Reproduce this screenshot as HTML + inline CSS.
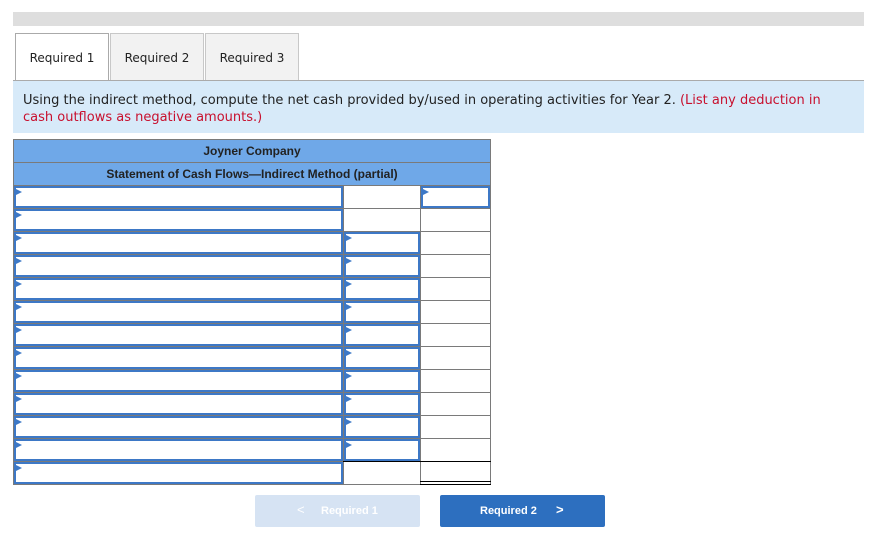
<!DOCTYPE html>
<html><head><style>
body{margin:0;width:888px;height:558px;background:#fff;font-family:"DejaVu Sans","Liberation Sans",sans-serif;position:relative;overflow:hidden}
.a{position:absolute;box-sizing:border-box}
.tab{top:33px;height:48px;width:94px;border:1px solid #c8c8c8;border-bottom:none;background:#f2f2f2;font-size:12px;color:#222;text-align:center;line-height:48px}
.c{border:1px solid #7a7a7a;background:#fff}
.i{border:2px solid #3d78c6;background:#fff}
.i:before{content:"";position:absolute;left:0;top:1px;border-left:6px solid #3d78c6;border-top:3px solid transparent;border-bottom:3px solid transparent}
.h{background:#6fa8e8;border:1px solid #7a7a7a;font-family:"Liberation Sans",sans-serif;font-weight:bold;font-size:12px;color:#222;text-align:center;line-height:22px}
</style></head><body>
<div class="a" style="left:13px;top:12px;width:851px;height:14px;background:#dedede"></div>
<div class="a tab" style="left:15px;background:#fff;border-color:#aaa">Required 1</div>
<div class="a tab" style="left:110px">Required 2</div>
<div class="a tab" style="left:205px">Required 3</div>
<div class="a" style="left:13px;top:80px;width:851px;height:1px;background:#aaa"></div>
<div class="a" style="left:13px;top:81px;width:851px;height:52px;background:#d7eaf9;padding:11px 30px 0 10px;font-size:13px;line-height:17px;color:#222">Using the indirect method, compute the net cash provided by/used in operating activities for Year 2. <span style="color:#c8102e">(List any deduction in cash outflows as negative amounts.)</span></div>
<div class="a" style="left:13px;top:139px;width:478px;height:346px;border:2px solid #7a7a7a"></div>
<div class="a h" style="left:13px;top:139px;width:478px;height:24px">Joyner Company</div>
<div class="a h" style="left:13px;top:162px;width:478px;height:24px">Statement of Cash Flows—Indirect Method (partial)</div>
<div id="rows"></div>
<script>
var h='';
for(var i=0;i<13;i++){var t=185+23*i;
h+='<div class="a c" style="left:13px;top:'+t+'px;width:331px;height:24px"></div>';
h+='<div class="a c" style="left:343px;top:'+t+'px;width:78px;height:24px"></div>';
h+='<div class="a c" style="left:420px;top:'+t+'px;width:71px;height:24px"></div>';
h+='<div class="a i" style="left:14px;top:'+(t+1)+'px;width:329px;height:22px"></div>';
if(i>=2&&i<=11)h+='<div class="a i" style="left:344px;top:'+(t+1)+'px;width:76px;height:22px"></div>';
if(i==0)h+='<div class="a i" style="left:421px;top:'+(t+1)+'px;width:69px;height:22px"></div>';
}
h+='<div class="a" style="left:343px;top:461px;width:148px;height:1px;background:#000"></div>';
h+='<div class="a" style="left:420px;top:481px;width:71px;height:4px;border-top:1px solid #000;border-bottom:1px solid #000"></div>';
document.getElementById('rows').innerHTML=h;
</script>
<div class="a" style="left:255px;top:495px;width:165px;height:32px;background:#d6e3f3;border-radius:2px;color:#fff;font-family:'Liberation Sans',sans-serif;font-weight:bold;font-size:11px;line-height:32px;padding-left:66px">Required 1<span style="position:absolute;left:42px;top:-1px;font-weight:normal;font-size:13px">&lt;</span></div>
<div class="a" style="left:440px;top:495px;width:165px;height:32px;background:#2d6fbf;border-radius:2px;color:#fff;font-family:'Liberation Sans',sans-serif;font-weight:bold;font-size:11px;line-height:32px;padding-left:40px">Required 2<span style="position:absolute;left:116px;top:-1px;font-size:13px">&gt;</span></div>
</body></html>
